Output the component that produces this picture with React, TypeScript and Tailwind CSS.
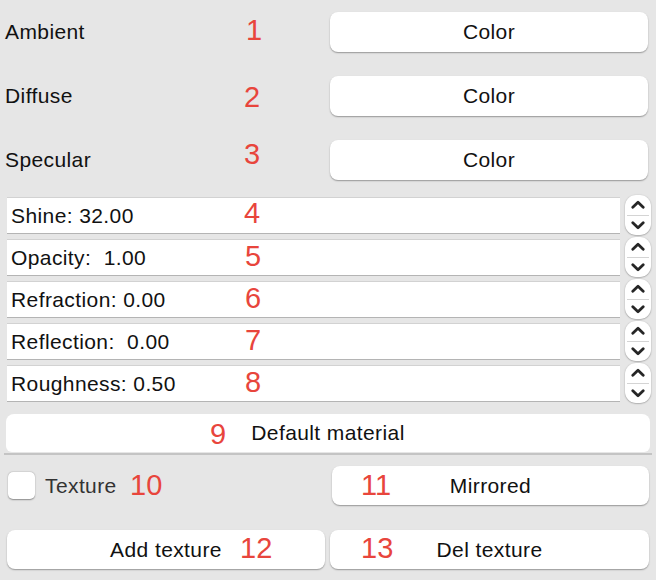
import React from "react";

const font = { fontFamily: '"Liberation Sans", Arial, sans-serif' };

const MacButton = ({ label, className }: { label: string; className?: string }) => (
  <div
    className={`flex items-center justify-center bg-white rounded-[8px] shadow-[0_1px_1.5px_rgba(0,0,0,0.35)] text-[21px] tracking-[0.4px] text-[#111] ${className ?? ""}`}
  >
    {label}
  </div>
);

const Stepper = () => (
  <div className="w-[26px] h-[40px] bg-white rounded-[11px] shadow-[0_0.5px_1.5px_rgba(0,0,0,0.4)] flex flex-col overflow-hidden">
    <div className="flex-1 flex items-center justify-center">
      <svg width="14" height="9" viewBox="0 0 14 9">
        <path d="M1.8 7.2 L7 2.2 L12.2 7.2" fill="none" stroke="#262626" strokeWidth="2.8" strokeLinecap="round" strokeLinejoin="round" />
      </svg>
    </div>
    <div className="h-px bg-[#d4d4d4] mx-[2px]" />
    <div className="flex-1 flex items-center justify-center">
      <svg width="14" height="9" viewBox="0 0 14 9">
        <path d="M1.8 1.8 L7 6.8 L12.2 1.8" fill="none" stroke="#262626" strokeWidth="2.8" strokeLinecap="round" strokeLinejoin="round" />
      </svg>
    </div>
  </div>
);

const fields = ["Shine: 32.00", "Opacity:  1.00", "Refraction: 0.00", "Reflection:  0.00", "Roughness: 0.50"];

const marks: { n: string; x: number; y: number }[] = [
  { n: "1", x: 246, y: 16 },
  { n: "2", x: 244, y: 83 },
  { n: "3", x: 244, y: 140 },
  { n: "4", x: 244, y: 199 },
  { n: "5", x: 245, y: 242 },
  { n: "6", x: 245, y: 284 },
  { n: "7", x: 245, y: 326 },
  { n: "8", x: 245, y: 368 },
  { n: "9", x: 210, y: 420 },
  { n: "10", x: 130, y: 471 },
  { n: "11", x: 361, y: 471 },
  { n: "12", x: 240, y: 534 },
  { n: "13", x: 361, y: 534 },
];

export default function App() {
  return (
    <div className="relative w-[656px] h-[580px] bg-[#e6e6e6] overflow-hidden select-none" style={font}>
      {/* colour rows */}
      <div className="flex flex-col pt-[12px] gap-[24px]">
        {["Ambient", "Diffuse", "Specular"].map((l) => (
          <div key={l} className="flex items-center justify-between pl-[5px] pr-[8px]">
            <span className="text-[21px] tracking-[0.4px] text-[#111]">{l}</span>
            <MacButton label="Color" className="w-[318px] h-[40px]" />
          </div>
        ))}
      </div>

      {/* numeric fields */}
      <div className="flex flex-col gap-[2px] mt-[15px] pl-[7px] pr-[5px]">
        {fields.map((f) => (
          <div key={f} className="flex items-center gap-[5px] h-[40px]">
            <div className="flex-1 h-[36px] bg-white border-t border-[#d2d2d2] shadow-[0_1px_0_#b4b4b4] flex items-center pl-[4px] text-[21px] tracking-[0.4px] text-[#111] whitespace-pre">
              {f}
            </div>
            <Stepper />
          </div>
        ))}
      </div>

      {/* default material */}
      <div className="mt-[11px] px-[4px]">
        <MacButton label="Default material" className="mx-[2px] h-[38px] rounded-b-[6px] shadow-none" />
        <div className="h-[2px] bg-[#c4c4c4] mt-[1px]" />
      </div>

      {/* texture row */}
      <div className="flex items-center justify-between mt-[11px] pl-[8px] pr-[7px]">
        <div className="flex items-center gap-[10px]">
          <div className="w-[27px] h-[27px] bg-white rounded-[5px] shadow-[0_0.5px_1.5px_rgba(0,0,0,0.4)]" />
          <span className="text-[21px] tracking-[0.4px] text-[#333]">Texture</span>
        </div>
        <MacButton label="Mirrored" className="w-[317px] h-[39px]" />
      </div>

      {/* add / del */}
      <div className="flex items-center gap-[5px] mt-[25px] pl-[7px] pr-[7px]">
        <MacButton label="Add texture" className="w-[318px] h-[39px]" />
        <MacButton label="Del texture" className="flex-1 h-[39px]" />
      </div>

      {/* annotations */}
      {marks.map((m) => (
        <span
          key={m.n}
          className="absolute text-[29px] leading-none text-[#e8453c]"
          style={{ left: m.x, top: m.y }}
        >
          {m.n}
        </span>
      ))}
    </div>
  );
}
